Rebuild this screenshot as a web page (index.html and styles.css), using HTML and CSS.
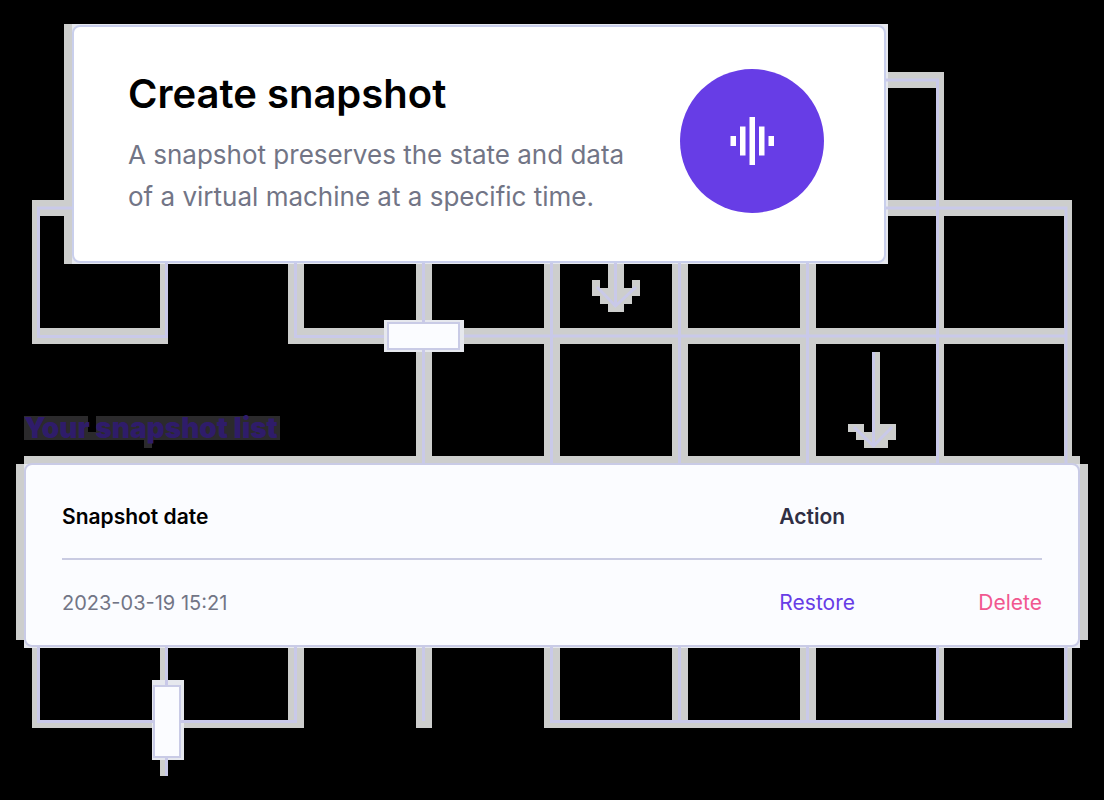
FILE: index.html
```html
<!DOCTYPE html>
<html lang="en">
<head>
<meta charset="utf-8">
<meta name="viewport" content="width=device-width, initial-scale=1">
<title>Snapshots</title>
<link rel="stylesheet" href="styles.css">
</head>
<body>
<main class="page">
  <svg class="circuit" viewBox="0 0 1104 800" aria-hidden="true">
    <g class="track">
      <path d="M64 24H888V264H64Z"/>
      <path d="M32 200H72V216H32ZM32 200H40V344H32ZM32 328H168V344H32ZM160 260H168V344H160Z"/>
      <path d="M288 260H304V344H288ZM288 328H1068V344H288ZM416 260H432V460H416ZM544 260H560V460H544ZM672 260H688V460H672ZM800 260H816V460H800Z"/>
      <path d="M880 72H944V88H880ZM936 72H944V460H936ZM880 200H1072V216H880ZM1064 200H1072V460H1064Z"/>
      <path d="M24 456H1080V464H24ZM16 464H1088V640H16Z"/>
      <path d="M32 640H40V728H32ZM32 720H304V728H32ZM160 640H168V776H160ZM288 640H304V728H288ZM416 640H432V728H416Z"/>
      <path d="M544 640H560V728H544ZM544 720H1072V728H544ZM672 640H688V728H672ZM800 640H816V728H800ZM936 640H944V728H936ZM1064 640H1072V728H1064Z"/>
      <path d="M608 260H624V288H632V280H640V296H632V304H624V312H608V304H600V296H592V280H600V288H608Z"/>
      <path d="M872 352H880V424H896V440H888V448H864V440H856V432H848V424H864V432H872Z"/>
    </g>
    <path class="halo" d="M72 24H888V264H72ZM24 464H1080V648H24ZM384 320H464V352H384ZM152 680H184V760H152Z"/>
    <g class="wire">
      <path d="M74 208H38.500V336.500H166.500V262M295.500 262V336.500H384M464 336H1065M423.500 262V322M423.500 350V463M551.500 262V463M679.500 262V463M807.500 262V463"/>
      <path d="M885 80H937.500V463M885 208H1066V463"/>
      <path d="M38.500 646V721.500H153M181 721.500H295.500V646M166.500 646V685M166.500 757V776M423.500 646V721M551.500 646V721.500H1066V646M679.500 646V721M807.500 646V721M937.500 646V721"/>
      <path d="M615.500 262V306M597 287L615.500 306L636 287M873.500 352V446M854 427L873.500 446L892 427"/>
    </g>
    <path class="node" d="M388 323H459V349H388ZM154 686H180V757H154Z"/>
    <path class="shade" d="M24 416H88V432H96V416H280V440H152V448H144V440H24Z"/>
  </svg>

  <section class="hero">
    <div class="hero-text">
      <h1 class="hero-title">Create snapshot</h1>
      <p class="hero-copy">A snapshot preserves the state and data of a virtual machine at a specific time.</p>
    </div>
    <svg class="hero-icon" viewBox="0 0 144 144" role="img" aria-label="Snapshot">
      <circle cx="72" cy="72" r="72" fill="#673de6"/>
      <path fill="#fff" d="M50.500 67h5.500v10h-5.500zM60 57.500h5.500v29h-5.500zM69.500 48h5.500v48h-5.500zM79 57.500h5.500v29H79zM88.500 67h5.500v10h-5.500z"/>
    </svg>
  </section>

  <h2 class="list-title">Your snapshot list</h2>

  <section class="list">
    <table class="table">
      <thead>
        <tr><th class="date" scope="col">Snapshot date</th><th class="action" scope="col" colspan="2">Action</th></tr>
      </thead>
      <tbody>
        <tr>
          <td>2023-03-19 15:21</td>
          <td><button class="btn restore" type="button">Restore</button></td>
          <td class="end"><button class="btn delete" type="button">Delete</button></td>
        </tr>
      </tbody>
    </table>
  </section>
</main>
</body>
</html>
```
FILE: styles.css
```css
* {
  box-sizing: border-box;
}

body {
  margin: 0;
  background: #000;
  font-family: Inter, "Open Sans", sans-serif;
}

.page {
  position: relative;
  isolation: isolate;
  min-height: 100vh;
  padding: 25px 24px 48px;
}

.circuit {
  position: absolute;
  top: 0;
  left: 0;
  z-index: -1;
  width: 100%;
}

.track {
  fill: #cdcecd;
}

.halo {
  fill: #e6e8ee;
}

.wire {
  fill: none;
  stroke: #c9c9e9;
  stroke-width: 3;
}

.node {
  fill: #fbfcff;
  stroke: #c9cbe6;
  stroke-width: 2;
}

.shade {
  fill: #2b2a2c;
}

.hero {
  display: flex;
  align-items: center;
  justify-content: space-between;
  gap: 32px;
  margin: 0 194px 0 48px;
  padding: 36px 60px 43px 54px;
  border: 2px solid #c9cfec;
  border-radius: 8px;
  background: #fff;
}

.hero-text {
  padding-top: 9px;
}

.hero-title {
  margin: 0 0 18px;
  color: #000;
  font-size: 40px;
  font-weight: 600;
  line-height: 44px;
}

.hero-copy {
  max-width: 520px;
  margin: 0;
  color: #727586;
  font-size: 26px;
  line-height: 42px;
}

.hero-icon {
  flex: none;
  width: 144px;
}

.list-title {
  margin: 149px 0 19px;
  color: #2f1c6a;
  font-size: 28px;
  font-weight: 900;
  line-height: 32px;
}

.list {
  padding: 0 36px;
  border: 2px solid #c9cbe6;
  border-radius: 8px;
  background: #fbfcff;
}

.table {
  width: 100%;
  border-collapse: collapse;
  table-layout: fixed;
  color: #727586;
  font-size: 20px;
  line-height: 28px;
}

.table th {
  padding: 38px 0 27px;
  border-bottom: 2px solid #c9cbe2;
  color: #000;
  font-size: 21px;
  font-weight: 600;
  text-align: left;
}

.table .date {
  width: 73.2%;
}

.table .action {
  color: #2f2e43;
}

.table td {
  padding: 29px 0 28px;
}

.table .end {
  text-align: right;
}

.btn {
  padding: 0;
  border: 0;
  background: none;
  font: inherit;
  font-size: 21px;
  cursor: pointer;
}

.restore {
  color: #673de6;
}

.delete {
  color: #f1578f;
}
```
